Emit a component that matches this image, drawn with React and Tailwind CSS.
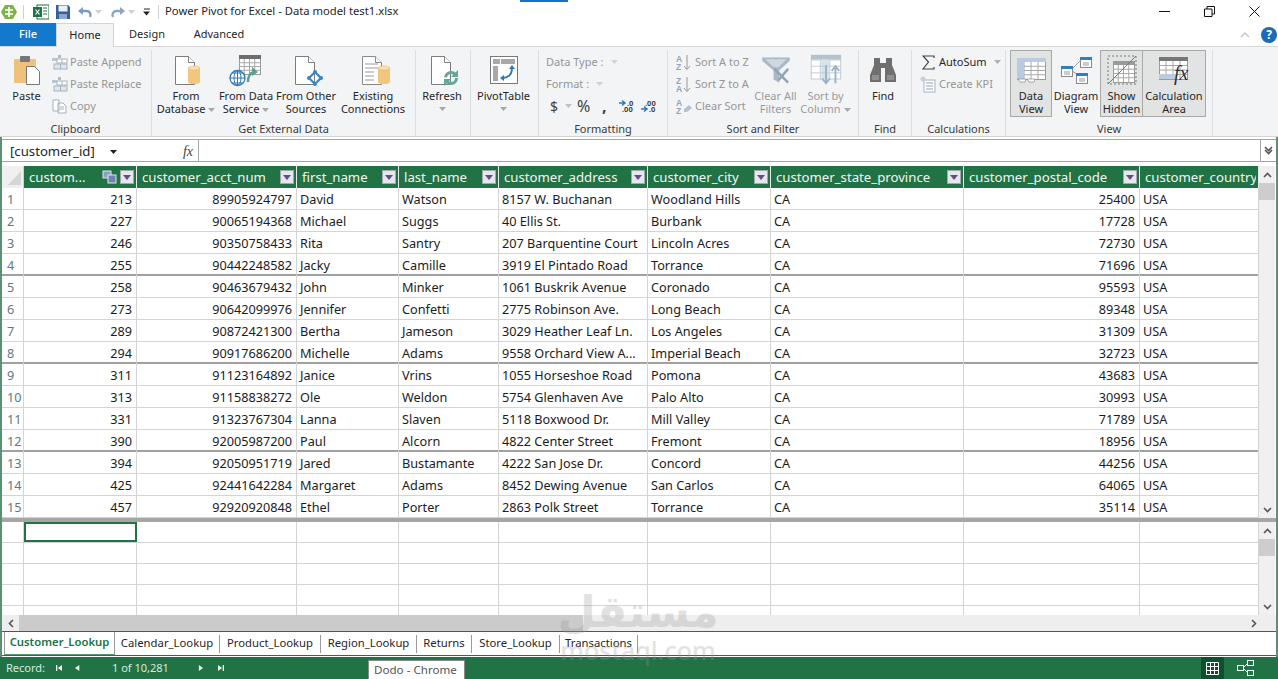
import React from "react";

const cols = "grid-cols-[22px_113px_160px_102px_100px_149px_123px_193px_176px_119px]";
const headers = ["custom...", "customer_acct_num", "first_name", "last_name", "customer_address", "customer_city", "customer_state_province", "customer_postal_code", "customer_country"];
const rows = [
  [213, "89905924797", "David", "Watson", "8157 W. Buchanan", "Woodland Hills", 25400],
  [227, "90065194368", "Michael", "Suggs", "40 Ellis St.", "Burbank", 17728],
  [246, "90350758433", "Rita", "Santry", "207 Barquentine Court", "Lincoln Acres", 72730],
  [255, "90442248582", "Jacky", "Camille", "3919 El Pintado Road", "Torrance", 71696],
  [258, "90463679432", "John", "Minker", "1061 Buskrik Avenue", "Coronado", 95593],
  [273, "90642099976", "Jennifer", "Confetti", "2775 Robinson Ave.", "Long Beach", 89348],
  [289, "90872421300", "Bertha", "Jameson", "3029 Heather Leaf Ln.", "Los Angeles", 31309],
  [294, "90917686200", "Michelle", "Adams", "9558 Orchard View A...", "Imperial Beach", 32723],
  [311, "91123164892", "Janice", "Vrins", "1055 Horseshoe Road", "Pomona", 43683],
  [313, "91158838272", "Ole", "Weldon", "5754 Glenhaven Ave", "Palo Alto", 30993],
  [331, "91323767304", "Lanna", "Slaven", "5118 Boxwood Dr.", "Mill Valley", 71789],
  [390, "92005987200", "Paul", "Alcorn", "4822 Center Street", "Fremont", 18956],
  [394, "92050951719", "Jared", "Bustamante", "4222 San Jose Dr.", "Concord", 44256],
  [425, "92441642284", "Margaret", "Adams", "8452 Dewing Avenue", "San Carlos", 64065],
  [457, "92920920848", "Ethel", "Porter", "2863 Polk Street", "Torrance", 35114],
];

const Caret = ({ c = "#8f8f8f" }) => (
  <svg width="7" height="4" viewBox="0 0 7 4" className="inline-block"><path d="M0 0h7L3.500 4z" fill={c} /></svg>
);

const Doc = ({ children, stroke = "#7d7d7d" }) => (
  <svg width="42" height="38" viewBox="0 0 42 38">
    <path d="M10.500 5.500h13l6 6v22h-19z" fill="#fff" stroke={stroke} />
    <path d="M23.500 5.500v6h6" fill="#fff" stroke={stroke} />
    {children}
  </svg>
);
const Cyl = ({ x = 20, y = 15 }) => (
  <g>
    <rect x={x} y={y + 2} width="12" height="14" fill="#efc77e" />
    <ellipse cx={x + 6} cy={y + 16} rx="6" ry="2" fill="#efc77e" />
    <ellipse cx={x + 6} cy={y + 2} rx="6" ry="2" fill="#f8e2b5" stroke="#e5b765" strokeWidth=".6" />
  </g>
);
const MiniGrid = ({ x = 0, y = 0, w = 30, h = 24, top = "#6d6d6d" }) => (
  <g>
    <rect x={x + .5} y={y + .5} width={w} height={h} fill="#fff" stroke="#9a9a9a" />
    <rect x={x} y={y} width={w + 1} height="4" fill={top} />
    {[1, 2, 3].map(i => <line key={i} x1={x + i * w / 4} x2={x + i * w / 4} y1={y + 4} y2={y + h} stroke="#a8a8a8" />)}
    {[1, 2, 3].map(i => <line key={i} x1={x} x2={x + w} y1={y + 4 + i * (h - 4) / 4} y2={y + 4 + i * (h - 4) / 4} stroke="#a8a8a8" />)}
  </g>
);

const Big = ({ w, icon, lines, caret, dim, active, under, cls = "" }) => (
  <div className={`${w} h-[67px] shrink-0 flex flex-col items-center ${active ? "bg-[#e2e4e4] border border-[#a8a8a8]" : "border border-transparent"} ${cls}`}>
    <div className="h-[38px] flex items-center justify-center">{icon}</div>
    <div className={`text-center leading-[13px] text-[11px] whitespace-nowrap ${dim ? "text-[#9b9b9b]" : "text-[#262626]"}`}>
      {lines.map((l, i) => (
        <div key={i}>{l}{caret && i === lines.length - 1 ? <span className="ml-[3px] align-middle inline-flex"><Caret c="#a8a8a8" /></span> : null}</div>
      ))}
      {under && <div className="h-[13px] flex items-center justify-center"><Caret c="#a8a8a8" /></div>}
    </div>
  </div>
);

const Small = ({ icon, label, dim = true, caret }) => (
  <div className="h-[22px] flex items-center gap-[2px] whitespace-nowrap">
    <span className="w-[18px] h-[18px] flex items-center justify-center">{icon}</span>
    <span className={`text-[11px] ${dim ? "text-[#969696]" : "text-[#262626]"}`}>{label}</span>
    {caret && <span className="ml-[5px] inline-flex"><Caret c="#b0b0b0" /></span>}
  </div>
);

const Group = ({ w, label, children, cls = "" }) => (
  <div className={`${w} shrink-0 h-full flex flex-col border-r border-[#dcdedf]`}>
    <div className={`h-[72px] shrink-0 flex ${cls}`}>{children}</div>
    <div className="h-[14px] shrink-0 text-center text-[11px] leading-[14px] text-[#3a3a3a] whitespace-nowrap">{label}</div>
  </div>
);

const SmallGrid = () => (
  <svg width="17" height="17" viewBox="0 0 17 17">
    <rect x="1" y="4" width="5" height="3" fill="#b9c6d4" />
    <rect x="7" y="1" width="3" height="3" fill="#b9b9b9" />
    <rect x="6" y="5" width="10" height="4" fill="#fff" stroke="#a8b2bc" />
    <rect x="3" y="10" width="13" height="5" fill="#dfe6ee" stroke="#a8b2bc" />
    <line x1="9.500" x2="9.500" y1="10" y2="15" stroke="#a8b2bc" />
    <line x1="11" x2="11" y1="5" y2="9" stroke="#a8b2bc" />
  </svg>
);

const AZ = ({ a, b, erase }) => (
  <svg width="17" height="17" viewBox="0 0 17 17">
    <text x="0" y="7.500" fontSize="8.500" fill="#8ea4bb" fontFamily="Liberation Sans" fontWeight="700">{a}</text>
    <text x="0" y="16" fontSize="8.500" fill="#8ea4bb" fontFamily="Liberation Sans" fontWeight="700">{b}</text>
    {erase ? <path d="M8 11l5-4 3 3-5 4h-3z" fill="#b7c2cf" /> : <path d="M11 1v14M8 12l3 3.500 3-3.500" stroke="#9a9a9a" fill="none" />}
  </svg>
);

const FilterBtn = () => (
  <svg width="34" height="31" viewBox="0 0 42 38">
    <path d="M4 3h34v4L25 19v15l-7-4V19L4 7z" fill="#a9b9c6" />
    <path d="M8 5h26L24 15h-6z" fill="#cfd8e0" />
    <path d="M19 17l17 17M36 17L24 31" stroke="#8fa5b6" strokeWidth="3" />
  </svg>
);

const SortCol = () => (
  <svg width="40" height="36" viewBox="0 0 42 38">
    <rect x="5" y="3" width="32" height="5" fill="#b4c2ce" />
    <rect x="5.500" y="8.500" width="31" height="20" fill="#fff" stroke="#c0cbd5" />
    <rect x="16" y="8" width="8" height="21" fill="#d4e3ec" />
    {[1, 2].map(i => <line key={i} x1="5" x2="37" y1={8 + i * 7} y2={8 + i * 7} stroke="#c0cbd5" />)}
    <line x1="15" x2="15" y1="8" y2="29" stroke="#c0cbd5" /><line x1="25" x2="25" y1="8" y2="29" stroke="#c0cbd5" />
    <path d="M21 14v18m-4-4l4 5 4-5M31 33V16m-4 4l4-5 4 5" stroke="#9cb1c2" strokeWidth="2" fill="none" />
  </svg>
);

const HeaderFilter = () => (
  <span className="w-[14px] h-[14px] bg-[#e6e6ee] border border-[#a6a6ae] flex items-center justify-center shrink-0">
    <svg width="8" height="5" viewBox="0 0 8 5"><path d="M0 0h8L4 5z" fill="#5f5080" /></svg>
  </span>
);

const Chev = ({ d = "up" }) => (
  <svg width="9" height="6" viewBox="0 0 9 6">
    <path d={d === "up" ? "M1 5l3.500-3.500L8 5" : "M1 1l3.500 3.500L8 1"} stroke="#555" strokeWidth="1.600" fill="none" />
  </svg>
);

const VScroll = ({ h }) => (
  <div className={`w-[16px] ${h} bg-[#f0f0f0] flex flex-col items-center shrink-0`}>
    <div className="h-[17px] flex items-center"><Chev /></div>
    <div className="h-[17px] w-full bg-[#cdcdcd]" />
    <div className="flex-1" />
    <div className="h-[17px] flex items-center"><Chev d="down" /></div>
  </div>
);

const Tab = ({ children, active, w }) => (
  <div className={active
    ? `${w} h-[24px] flex items-center justify-center bg-white border-l border-r border-[#9a9a9a] text-[#217346] font-semibold border-b-2 border-b-[#4f9a72] text-[11.3px]`
    : `${w} h-[18px] flex items-center justify-center border-r border-[#9a9a9a] text-[#262626] text-[11.3px]`}>{children}</div>
);

const Nav = ({ d }) => (
  <svg width="6" height="6" viewBox="0 0 7 7"><path d={d} fill="#e8f0ea" /></svg>
);

export default function App() {
  return (
    <div className="relative w-[1278px] h-[679px] overflow-hidden bg-white flex flex-col [font-family:'Noto_Sans','Open_Sans',sans-serif] text-[#1f1f1f]">
      {/* title bar */}
      <div className="h-[23px] shrink-0 flex items-center relative">
        <svg width="16" height="16" viewBox="0 0 16 16" className="ml-[1px]">
          <path d="M4 1h8l4 7-4 7H4L0 8z" fill="#7fb24a" />
          <path d="M8 3v10M4 6h8M4 10h8" stroke="#fff" strokeWidth="1.600" />
        </svg>
        <div className="w-px h-[14px] bg-[#d0d0d0] ml-[6px]" />
        <svg width="16" height="16" viewBox="0 0 16 16" className="ml-[9px]">
          <rect x="4" y="1" width="12" height="14" fill="#fff" stroke="#1f6e43" />
          <rect x="0" y="3" width="9" height="10" fill="#1f7244" />
          <path d="M2.500 5.500l4 5M6.500 5.500l-4 5" stroke="#fff" strokeWidth="1.200" />
          <path d="M10 4h4M10 7h4M10 10h4" stroke="#1f7244" />
        </svg>
        <svg width="16" height="16" viewBox="0 0 16 16" className="ml-[6px]">
          <path d="M1 1h12l2 2v12H1z" fill="#3a5f96" />
          <rect x="3.500" y="1.500" width="9" height="6" fill="#e8eef6" />
          <rect x="4" y="10" width="8" height="5" fill="#8aa7cc" />
        </svg>
        <svg width="16" height="14" viewBox="0 0 16 14" className="ml-[6px]">
          <path d="M3 6h7a4 4 0 0 1 3 6" stroke="#7f9cbc" strokeWidth="2.400" fill="none" />
          <path d="M1 6l5-4v8z" fill="#7f9cbc" />
        </svg>
        <span className="ml-[2px] inline-flex"><Caret c="#d0d0d0" /></span>
        <svg width="16" height="14" viewBox="0 0 16 14" className="ml-[8px]">
          <path d="M13 6H6a4 4 0 0 0-3 6" stroke="#8ba5c3" strokeWidth="2.400" fill="none" />
          <path d="M15 6l-5-4v8z" fill="#8ba5c3" />
        </svg>
        <span className="ml-[2px] inline-flex"><Caret c="#d0d0d0" /></span>
        <svg width="8" height="8" viewBox="0 0 8 8" className="ml-[8px]">
          <path d="M1 1h6" stroke="#222" /><path d="M0 3.500h7L3.500 7.500z" fill="#222" />
        </svg>
        <div className="w-px h-[14px] bg-[#d0d0d0] ml-[7px]" />
        <span className="ml-[6px] text-[11.25px] text-[#262626] whitespace-nowrap">Power Pivot for Excel - Data model test1.xlsx</span>
        <div className="flex-1" />
        <svg width="11" height="11" viewBox="0 0 11 11" className="mr-[34px]"><path d="M0 5.500h11" stroke="#111" /></svg>
        <svg width="11" height="11" viewBox="0 0 11 11" className="mr-[34px]"><path d="M.5 3h7.500v7.500h-7.500zM3 3V.5h7.500V8H8" fill="none" stroke="#111" /></svg>
        <svg width="11" height="11" viewBox="0 0 11 11" className="mr-[18px]"><path d="M.5.5l10 10M10.500.5l-10 10" stroke="#111" /></svg>
        <div className="absolute left-[520px] top-0 w-[48px] h-[2px] bg-[#1473c5]" />
      </div>

      {/* tab strip */}
      <div className="h-[23px] shrink-0 flex items-stretch relative text-[11px]">
        <div className="w-[56px] bg-[#1279cd] text-white flex items-center justify-center font-medium">File</div>
        <div className="w-[58px] bg-[#f3f4f6] border-l border-r border-t border-[#d4d4d4] flex items-center justify-center relative z-10 -mb-px">Home</div>
        <div className="w-[66px] flex items-center justify-center">Design</div>
        <div className="w-[78px] flex items-center justify-center">Advanced</div>
        <div className="flex-1" />
        <div className="flex items-center">
          <svg width="10" height="6" viewBox="0 0 10 6" className="mr-[11px]"><path d="M1 5l4-4 4 4" stroke="#c4c4c4" fill="none" strokeWidth="1.300" /></svg>
          <div className="w-[16px] h-[16px] rounded-full bg-[#1a6bb8] text-white text-[12px] font-bold flex items-center justify-center mr-px">?</div>
        </div>
      </div>

      {/* ribbon */}
      <div className="h-[91px] shrink-0 bg-[#f3f4f6] border-t border-b border-[#d6d6d6] flex pt-[3px]">
        <Group w="w-[152px]" label="Clipboard" cls="pl-[3px]">
          <Big w="w-[47px]" lines={["Paste"]} icon={
            <svg width="30" height="30" viewBox="0 0 30 30">
              <rect x="2" y="4" width="22" height="24" rx="1" fill="#eec27a" />
              <rect x="8" y="1" width="10" height="6" rx="1" fill="#777" />
              <path d="M14.500 11.500h8l5 5v13h-13z" fill="#fff" stroke="#777" />
            </svg>
          } />
          <div className="flex flex-col pt-px">
            <Small icon={<SmallGrid />} label="Paste Append" />
            <Small icon={<SmallGrid />} label="Paste Replace" />
            <Small icon={
              <svg width="15" height="15" viewBox="0 0 15 15"><path d="M1 1h6v11H1zM6 4h5l3 3v7H6z" fill="#fff" stroke="#a4b0bb" /><path d="M8 8h4M8 10h4" stroke="#a4b0bb" /></svg>
            } label="Copy" />
          </div>
        </Group>
        <Group w="w-[264px]" label="Get External Data" cls="pl-[5px]">
          <Big w="w-[58px]" lines={["From", "Database"]} caret icon={<Doc><Cyl x={23} y={15} /></Doc>} />
          <Big w="w-[62px]" lines={["From Data", "Service"]} caret icon={
            <svg width="44" height="38" viewBox="0 0 44 38">
              <MiniGrid x={15} y={4} w={21} h={19} />
              <circle cx="13.500" cy="27" r="7.500" fill="#fff" stroke="#2d79b5" strokeWidth="1.300" />
              <path d="M6 27h15M13.500 19.500v15M8 22h11M8 32h11" stroke="#2d79b5" />
              <ellipse cx="13.500" cy="27" rx="3.500" ry="7.500" fill="none" stroke="#2d79b5" />
              <path d="M24 31c0-6 2-9 6-10" stroke="#5aa08e" strokeWidth="2.400" fill="none" /><path d="M28 16l6 5-6 4z" fill="#5aa08e" />
            </svg>
          } />
          <Big w="w-[58px]" lines={["From Other", "Sources"]} icon={
            <Doc>
              <path d="M30 21l6 6-6 6-6-6z" fill="none" stroke="#3a86c0" strokeWidth="2.200" />
              <circle cx="30" cy="21" r="2" fill="#3a86c0" /><circle cx="36" cy="27" r="2" fill="#3a86c0" /><circle cx="30" cy="33" r="2" fill="#3a86c0" /><circle cx="24" cy="27" r="2" fill="#3a86c0" />
            </Doc>
          } />
          <Big w="w-[76px]" lines={["Existing", "Connections"]} icon={
            <Doc stroke="#8a8a8a">
              <path d="M13 13h13M13 17h13M13 21h9M13 25h9M13 29h9" stroke="#9a9a9a" />
              <Cyl x={26} y={15} />
            </Doc>
          } />
        </Group>
        <Group w="w-[55px]" label="">
          <Big w="w-[52px]" under lines={["Refresh"]} icon={
            <Doc>
              <circle cx="30" cy="27" r="5.500" fill="none" stroke="#62a892" strokeWidth="3" strokeDasharray="13 4.500" />
              <path d="M37 19v7h-7z" fill="#62a892" /><path d="M23 35v-7h7z" fill="#62a892" />
            </Doc>
          } />
        </Group>
        <Group w="w-[68px]" label="">
          <Big w="w-[65px]" under lines={["PivotTable"]} icon={
            <svg width="30" height="30" viewBox="0 0 30 30">
              <rect x="1.500" y="1.500" width="27" height="27" fill="#fff" stroke="#777" />
              <rect x="4" y="4" width="22" height="5" fill="#a9a9a9" /><rect x="4" y="11" width="5" height="15" fill="#a9a9a9" />
              <rect x="11" y="4" width="1" height="5" fill="#fff" />
              <path d="M13 23c6 0 10-3 10-10" stroke="#2e78b0" strokeWidth="1.800" fill="none" />
              <path d="M20 14l3-4 3 4zM15 20l-4 3 4 3z" fill="#2e78b0" />
            </svg>
          } />
        </Group>
        <Group w="w-[129px]" label="Formatting" cls="pl-[7px]">
          <div className="flex flex-col pt-px">
            <div className="h-[22px] flex items-center text-[11px] text-[#969696] whitespace-nowrap">Data Type :<span className="ml-[7px] inline-flex"><Caret c="#d2d2d2" /></span></div>
            <div className="h-[22px] flex items-center text-[11px] text-[#969696] whitespace-nowrap">Format :<span className="ml-[7px] inline-flex"><Caret c="#d2d2d2" /></span></div>
            <div className="h-[22px] flex items-center whitespace-nowrap text-[#3f3f3f]">
              <span className="text-[14px] ml-[4px] w-[13px]">$</span>
              <span className="inline-flex ml-[2px]"><Caret c="#c0c0c0" /></span>
              <span className="text-[16px] ml-[5px] w-[20px]">%</span>
              <span className="text-[16px] font-bold ml-[5px] w-[12px] leading-[14px]">,</span>
              <svg width="18" height="14" viewBox="0 0 18 14" className="ml-[5px]">
                <path d="M0 4h5M3 1.500L6 4 3 6.500" stroke="#2e78b0" strokeWidth="1.500" fill="none" />
                <text x="8" y="6.500" fontSize="7.500" fontWeight="700" fill="#444">.0</text><text x="3" y="13" fontSize="7.500" fontWeight="700" fill="#444">.00</text>
              </svg>
              <svg width="18" height="14" viewBox="0 0 18 14" className="ml-[4px]">
                <path d="M0 10h5M3 7.500L6 10 3 12.500" stroke="#2e78b0" strokeWidth="1.500" fill="none" />
                <text x="4" y="6.500" fontSize="7.500" fontWeight="700" fill="#444">.00</text><text x="8" y="13" fontSize="7.500" fontWeight="700" fill="#444">.0</text>
              </svg>
            </div>
          </div>
        </Group>
        <Group w="w-[191px]" label="Sort and Filter" cls="pl-[7px]">
          <div className="flex flex-col pt-px w-[76px] shrink-0">
            <Small icon={<AZ a="A" b="Z" />} label="Sort A to Z" />
            <Small icon={<AZ a="Z" b="A" />} label="Sort Z to A" />
            <Small icon={<AZ a="A" b="Z" erase />} label="Clear Sort" />
          </div>
          <Big w="w-[49px]" dim lines={["Clear All", "Filters"]} icon={<FilterBtn />} />
          <Big w="w-[51px]" dim caret lines={["Sort by", "Column"]} icon={<SortCol />} />
        </Group>
        <Group w="w-[53px]" label="Find">
          <Big w="w-[48px]" lines={["Find"]} icon={
            <svg width="28" height="26" viewBox="0 0 28 26">
              <path d="M5 1h6v5h6V1h6v7l4 10v7H16V11h-4v14H1v-7L5 8z" fill="#6f6f6f" />
              <path d="M3 18h7v5H3zM18 18h7v5h-7z" fill="#8f8f8f" />
            </svg>
          } />
        </Group>
        <Group w="w-[94px]" label="Calculations" cls="pl-[7px]">
          <div className="flex flex-col pt-px">
            <Small dim={false} caret icon={
              <svg width="13" height="15" viewBox="0 0 13 15"><path d="M12 3V1H1l5.500 6L1 14h11v-2" fill="none" stroke="#444" strokeWidth="1.200" /></svg>
            } label="AutoSum" />
            <Small icon={
              <svg width="16" height="17" viewBox="0 0 16 17"><rect x="4" y="4" width="11" height="12" fill="#fff" stroke="#a8b2bc" /><path d="M6 7h7M6 10h7M6 13h7" stroke="#b4c2ce" strokeWidth="1.500" /><circle cx="3" cy="3" r="2.500" fill="#c6d2dc" /></svg>
            } label="Create KPI" />
          </div>
        </Group>
        <Group w="w-[207px]" label="View" cls="pl-[4px]">
          <Big active w="w-[42px]" lines={["Data", "View"]} icon={
            <svg width="30" height="30" viewBox="0 0 30 30">
              <MiniGrid x={1} y={3} w={28} h={21} top="#b8cbe0" />
              <rect x="1" y="3" width="7" height="21" fill="#b8cbe0" />
              <path d="M2 24h8l-1 3H4zM11 24h8l-1 3h-5z" fill="#fff" stroke="#888" strokeWidth=".7" />
            </svg>
          } />
          <Big w="w-[48px]" lines={["Diagram", "View"]} icon={
            <svg width="32" height="30" viewBox="0 0 32 30">
              <path d="M12 14l8-8M12 16l8 5" stroke="#999" />
              <g fill="#fff" stroke="#8a8a8a">
                <rect x="20.500" y="2.500" width="11" height="10" /><rect x="1.500" y="11.500" width="11" height="10" /><rect x="16.500" y="18.500" width="11" height="10" />
              </g>
              <g fill="#2f7fc0"><rect x="20" y="2" width="12" height="3" /><rect x="1" y="11" width="12" height="3" /><rect x="16" y="18" width="12" height="3" /></g>
              <path d="M23 8h6M23 10h6M4 17h6M4 19h6M19 24h6M19 26h6" stroke="#999" />
            </svg>
          } />
          <Big active w="w-[43px]" lines={["Show", "Hidden"]} icon={
            <svg width="30" height="30" viewBox="0 0 30 30">
              <path d="M1 1h28v28H1z" fill="none" stroke="#777" strokeDasharray="2 2" />
              <MiniGrid x={6} y={6} w={21} h={21} top="#9a9a9a" />
              <path d="M1 29L29 1" stroke="#777" />
            </svg>
          } />
          <Big active w="w-[64px]" cls="-ml-px" lines={["Calculation", "Area"]} icon={
            <svg width="32" height="30" viewBox="0 0 32 30">
              <MiniGrid x={1} y={2} w={28} h={22} top="#777" />
              <rect x="1" y="19" width="18" height="5" fill="#bacde0" />
              <text x="16" y="25" fontSize="20" fontStyle="italic" fontFamily="Liberation Serif" fill="#333">fx</text>
            </svg>
          } />
        </Group>
      </div>

      {/* main */}
      <div className="flex-1 min-h-0 flex flex-col border-l-2 border-r-2 border-[#5d8f74] text-[12.7px]">
        <div className="h-[2px] shrink-0" />
        {/* formula bar */}
        <div className="h-[23px] shrink-0 flex border-t border-b border-[#a4a4a4]">
          <div className="w-[197px] flex items-center pl-[8px] pt-[2px] border-r border-[#a4a4a4]">
            <span className="text-[#262626] text-[13.2px]">[customer_id]</span>
            <span className="ml-[15px] inline-flex"><Caret c="#222" /></span>
            <span className="ml-auto mr-[5px] [font-family:'Liberation_Serif',serif] italic text-[14px] text-[#444]">fx</span>
          </div>
          <div className="flex-1" />
          <div className="w-[16px] border-l border-[#a4a4a4] flex flex-col items-center justify-center gap-[1px]">
            <Chev d="down" /><div className="-mt-[4px]"><Chev d="down" /></div>
          </div>
        </div>
        <div className="h-[4px] shrink-0" />
        {/* upper grid */}
        <div className="h-[352px] shrink-0 flex overflow-hidden">
          <div className="w-[1257px] shrink-0">
            <div className={`grid ${cols} h-[22px]`}>
              <div className="bg-[#f0f0f0] border-r border-[#d0d0d0] overflow-hidden">
                <svg width="21" height="22" viewBox="0 0 21 22" className="block"><path d="M19 5v14H6z" fill="#d6d6d6" /></svg>
              </div>
              {headers.map((h, i) => (
                <div key={h} className="bg-[#217346] border-r border-[#e8e8e8] text-[#f3f7f4] flex items-center pl-[5px] pr-[2px] whitespace-nowrap overflow-hidden text-[13.2px]">
                  <span className="flex-1 overflow-hidden leading-[24px]">{h}</span>
                  {i === 0 && (
                    <svg width="15" height="14" viewBox="0 0 15 14" className="mr-[3px] shrink-0">
                      <rect x="1" y="1" width="8" height="7" fill="#8aa0c2" stroke="#dfe6ef" /><rect x="6" y="5" width="8" height="8" fill="#6f85ad" stroke="#dfe6ef" />
                    </svg>
                  )}
                  {i < 8 && <HeaderFilter />}
                </div>
              ))}
            </div>
            {rows.map((r, i) => {
              const heavy = i === 3 || i === 7 || i === 11;
              const cells = [
                [r[0], true], [r[1], true], [r[2]], [r[3]], [r[4]], [r[5]], ["CA"], [r[6], true], ["USA"],
              ];
              return (
                <div key={i} className={`grid ${cols} h-[22px] ${heavy ? "border-b-2 border-[#a0a0a0]" : "border-b border-[#d4d4d4]"}`}>
                  <div className="border-r border-[#d4d4d4] pl-[5px] leading-[23px] text-[#63797f]">{i + 1}</div>
                  {cells.map(([v, num], j) => (
                    <div key={j} className={`border-r border-[#d4d4d4] leading-[23px] whitespace-nowrap overflow-hidden text-[#1c1c1c] ${num ? "text-right pr-[4px]" : "pl-[3px]"}`}>{v}</div>
                  ))}
                </div>
              );
            })}
          </div>
          <VScroll h="h-[352px]" />
        </div>
        {/* splitter */}
        <div className="h-[4px] shrink-0 bg-[#a6a6a6]" />
        {/* lower grid */}
        <div className="h-[93px] shrink-0 flex overflow-hidden">
          <div className="w-[1257px] shrink-0 overflow-hidden">
            {[0, 1, 2, 3, 4].map(i => (
              <div key={i} className={`grid ${cols} h-[21px] border-b border-[#d4d4d4]`}>
                {Array.from({ length: 10 }).map((_, j) => (
                  <div key={j} className={i === 0 && j === 1 ? "border-2 border-[#217346]" : "border-r border-[#d4d4d4]"} />
                ))}
              </div>
            ))}
          </div>
          <VScroll h="h-[93px]" />
        </div>
        {/* h scroll */}
        <div className="h-[16px] shrink-0 bg-[#eeeeee] flex items-center">
          <div className="w-[17px] flex justify-center">
            <svg width="6" height="9" viewBox="0 0 6 9"><path d="M5 1L1.500 4.500 5 8" stroke="#555" strokeWidth="1.600" fill="none" /></svg>
          </div>
          <div className="w-[564px] h-full bg-[#cbcbcb]" />
          <div className="flex-1" />
          <div className="w-[17px] mr-[14px] flex justify-center">
            <svg width="6" height="9" viewBox="0 0 6 9"><path d="M1 1l3.500 3.500L1 8" stroke="#555" strokeWidth="1.600" fill="none" /></svg>
          </div>
        </div>
        {/* tabs */}
        <div className="h-[25px] shrink-0 border-t border-b border-[#217346] flex items-center pl-[2px] overflow-hidden">
          <Tab active w="w-[111px]">Customer_Lookup</Tab>
          <Tab w="w-[105px]">Calendar_Lookup</Tab>
          <Tab w="w-[101px]">Product_Lookup</Tab>
          <Tab w="w-[96px]">Region_Lookup</Tab>
          <Tab w="w-[55px]">Returns</Tab>
          <Tab w="w-[88px]">Store_Lookup</Tab>
          <Tab w="w-[78px]">Transactions</Tab>
        </div>
        <div className="h-[1px] shrink-0" />
      </div>

      {/* status bar */}
      <div className="h-[22px] shrink-0 bg-[#217346] flex items-center text-[11px] text-[#dbe8df] relative">
        <span className="ml-[6px] w-[48px]">Record:</span>
        <span className="ml-[2px] inline-flex w-[19px]"><Nav d="M0 0h1.500v7H0zM7 0v7L2 3.500z" /></span>
        <span className="inline-flex w-[37px]"><Nav d="M5 0v7L0 3.500z" /></span>
        <span className="w-[86px]">1 of 10,281</span>
        <span className="inline-flex w-[20px]"><Nav d="M1 0v7l5-3.500z" /></span>
        <span className="inline-flex"><Nav d="M0 0v7l5-3.500zM5.500 0H7v7H5.500z" /></span>
        <div className="flex-1" />
        <div className="w-[23px] h-[22px] bg-[#0e4f2e] flex items-center justify-center mr-[13px]">
          <svg width="13" height="13" viewBox="0 0 13 13"><path d="M.5.5h12v12H.5zM4.500.5v12M8.500.5v12M.5 4.500h12M.5 8.500h12" fill="none" stroke="#fff" /></svg>
        </div>
        <svg width="17" height="16" viewBox="0 0 17 16" className="mr-[24px]">
          <path d="M6 8l4-4M6 8l4 4" stroke="#fff" />
          <g fill="#217346" stroke="#fff"><rect x=".5" y="5.500" width="6" height="5" /><rect x="10.500" y=".5" width="6" height="5" /><rect x="10.500" y="10.500" width="6" height="5" /></g>
        </svg>
        <div className="absolute left-[368px] top-[3px] w-[97px] h-[20px] bg-white border border-[#8a8a8a] text-[#555] text-[11.6px] pl-[5px] leading-[18px] whitespace-nowrap">Dodo - Chrome</div>
      </div>

      {/* watermark */}
      <div className="absolute left-[552px] top-[587px] w-[172px] text-center text-[#999] opacity-[0.28] pointer-events-none">
        <div dir="rtl" className="[font-family:'DejaVu_Sans',sans-serif] font-bold text-[44px] leading-[50px]">مستقل</div>
        <div className="[font-family:'Noto_Sans',sans-serif] text-[25px] leading-[26px] font-medium">mostaql.com</div>
      </div>
    </div>
  );
}
